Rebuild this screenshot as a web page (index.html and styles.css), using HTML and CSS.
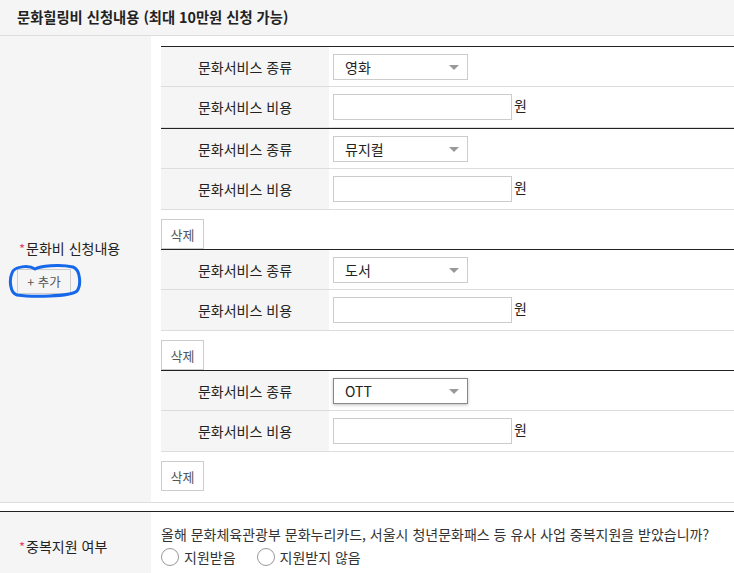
FILE: index.html
```html
<!DOCTYPE html>
<html lang="ko">
<head>
<meta charset="utf-8">
<title>문화힐링비 신청내용</title>
<link rel="stylesheet" href="styles.css">
</head>
<body>
<div class="section-title">문화힐링비 신청내용 (최대 10만원 신청 가능)</div>

<div class="form-row first">
  <div class="row-label">
    <div class="label-group">
      <div class="label"><span class="req">*</span>문화비 신청내용</div>
      <span class="add-wrap">
        <button class="btn-add" type="button">+ 추가</button>
        <svg class="scribble" width="80" height="40" viewBox="0 0 80 40" aria-hidden="true">
          <path d="M5 9 C7 2, 22 1, 28 5 C33 2, 52 0, 66 3 C74 6, 74 22, 70 27 C63 33, 24 33, 10 31 C3 29, 2 16, 5 9 Z" fill="none" stroke="#1668ea" stroke-width="3" stroke-linejoin="round"/>
        </svg>
      </span>
    </div>
  </div>
  <div class="row-body">
    <div class="sub">
      <div class="sub-row"><div class="sub-th">문화서비스 종류</div><div class="sub-td"><div class="select"><span>영화</span><i class="arrow"></i></div></div></div>
      <div class="sub-row"><div class="sub-th">문화서비스 비용</div><div class="sub-td"><span class="input"></span><span class="unit">원</span></div></div>
    </div>
    <div class="sub">
      <div class="sub-row"><div class="sub-th">문화서비스 종류</div><div class="sub-td"><div class="select"><span>뮤지컬</span><i class="arrow"></i></div></div></div>
      <div class="sub-row"><div class="sub-th">문화서비스 비용</div><div class="sub-td"><span class="input"></span><span class="unit">원</span></div></div>
    </div>
    <div class="btn-line"><button class="btn-del" type="button">삭제</button></div>
    <div class="sub">
      <div class="sub-row"><div class="sub-th">문화서비스 종류</div><div class="sub-td"><div class="select"><span>도서</span><i class="arrow"></i></div></div></div>
      <div class="sub-row"><div class="sub-th">문화서비스 비용</div><div class="sub-td"><span class="input"></span><span class="unit">원</span></div></div>
    </div>
    <div class="btn-line"><button class="btn-del" type="button">삭제</button></div>
    <div class="sub">
      <div class="sub-row"><div class="sub-th">문화서비스 종류</div><div class="sub-td"><div class="select focused"><span>OTT</span><i class="arrow"></i></div></div></div>
      <div class="sub-row"><div class="sub-th">문화서비스 비용</div><div class="sub-td"><span class="input"></span><span class="unit">원</span></div></div>
    </div>
    <div class="btn-line last"><button class="btn-del" type="button">삭제</button></div>
  </div>
</div>

<div class="form-row second">
  <div class="row-label">
    <div class="label"><span class="req">*</span>중복지원 여부</div>
  </div>
  <div class="row-body q-body">
    <p class="question">올해 문화체육관광부 문화누리카드, 서울시 청년문화패스 등 유사 사업 중복지원을 받았습니까?</p>
    <div class="radios">
      <label class="radio"><span class="circle"></span>지원받음</label>
      <label class="radio"><span class="circle"></span>지원받지 않음</label>
    </div>
  </div>
</div>
</body>
</html>
```

FILE: styles.css
```css
html, body {
  margin: 0;
  padding: 0;
  background: #fff;
}
body {
  font-family: "Noto Sans CJK KR", "Noto Sans", sans-serif;
  font-size: 14px;
  color: #333;
  overflow: hidden;
}
.section-title {
  height: 35px;
  line-height: 34px;
  padding-left: 17px;
  background: #f5f5f5;
  border-bottom: 1px solid #ddd;
  font-weight: bold;
  font-size: 14.3px;
  color: #222;
}
.form-row {
  display: flex;
}
.form-row.first {
  border-bottom: 1px solid #ddd;
}
.form-row.second {
  margin-top: 8px;
  border-top: 1px solid #222;
  height: 68px;
}
.row-label {
  width: 151px;
  flex: none;
  background: #f5f5f5;
  display: flex;
  align-items: center;
  padding-left: 17px;
  box-sizing: border-box;
}
.label-group {
  display: flex;
  flex-direction: column;
  align-items: flex-start;
  margin-top: -6px;
}
.label {
  padding-left: 2px;
  color: #222;
}
.req {
  color: #e8416e;
  margin-right: 1px;
  font-size: 13px;
}
.add-wrap {
  position: relative;
  display: inline-block;
  margin-top: 11px;
}
.btn-add {
  display: block;
  height: 25px;
  width: 54px;
  padding: 0;
  border: 1px solid #ccc;
  background: #f5f5f5;
  font-family: inherit;
  font-size: 12.5px;
  color: #555;
}
.scribble {
  position: absolute;
  left: -10px;
  top: -5px;
  pointer-events: none;
}
.row-body {
  flex: 1;
  padding: 10px 0 11px 10px;
}
.sub {
  border-top: 1px solid #222;
}
.sub-row {
  display: flex;
  height: 40px;
  border-bottom: 1px solid #ddd;
  box-sizing: border-box;
}
.sub-row:last-child {
  height: 41px;
}
.sub-th {
  width: 168px;
  flex: none;
  background: #f5f5f5;
  color: #222;
  display: flex;
  align-items: center;
  justify-content: center;
}
.sub-td {
  flex: 1;
  padding-left: 4px;
  display: flex;
  align-items: center;
  white-space: nowrap;
}
.select {
  position: relative;
  width: 135px;
  height: 26px;
  box-sizing: border-box;
  border: 1px solid #ccc;
  background: #fff;
  line-height: 24px;
  padding-left: 11px;
  color: #222;
}
.select.focused {
  border-color: #888;
  box-shadow: 0 1px 3px rgba(0, 0, 0, 0.25);
}
.arrow {
  position: absolute;
  right: 8px;
  top: 10px;
  width: 0;
  height: 0;
  border-left: 5px solid transparent;
  border-right: 5px solid transparent;
  border-top: 5px solid #999;
}
.input {
  display: block;
  width: 179px;
  height: 26px;
  box-sizing: border-box;
  border: 1px solid #ccc;
  background: #fff;
}
.unit {
  margin-left: 2px;
  color: #222;
  align-self: center;
  margin-top: -4px;
}
.btn-line {
  padding-top: 9px;
}
.btn-del {
  display: block;
  width: 43px;
  height: 30px;
  padding: 0;
  border: 1px solid #ccc;
  background: #fff;
  font-family: inherit;
  font-size: 13px;
  color: #555;
}
.q-body {
  padding-top: 11px;
}
.question {
  margin: 0;
  line-height: 22px;
  color: #333;
}
.radios {
  display: flex;
  gap: 21px;
  line-height: 22px;
  margin-top: 1px;
}
.radio {
  display: flex;
  align-items: center;
  gap: 5px;
  color: #333;
}
.circle {
  width: 16px;
  height: 16px;
  border: 1px solid #999;
  border-radius: 50%;
  background: #fff;
}
```
